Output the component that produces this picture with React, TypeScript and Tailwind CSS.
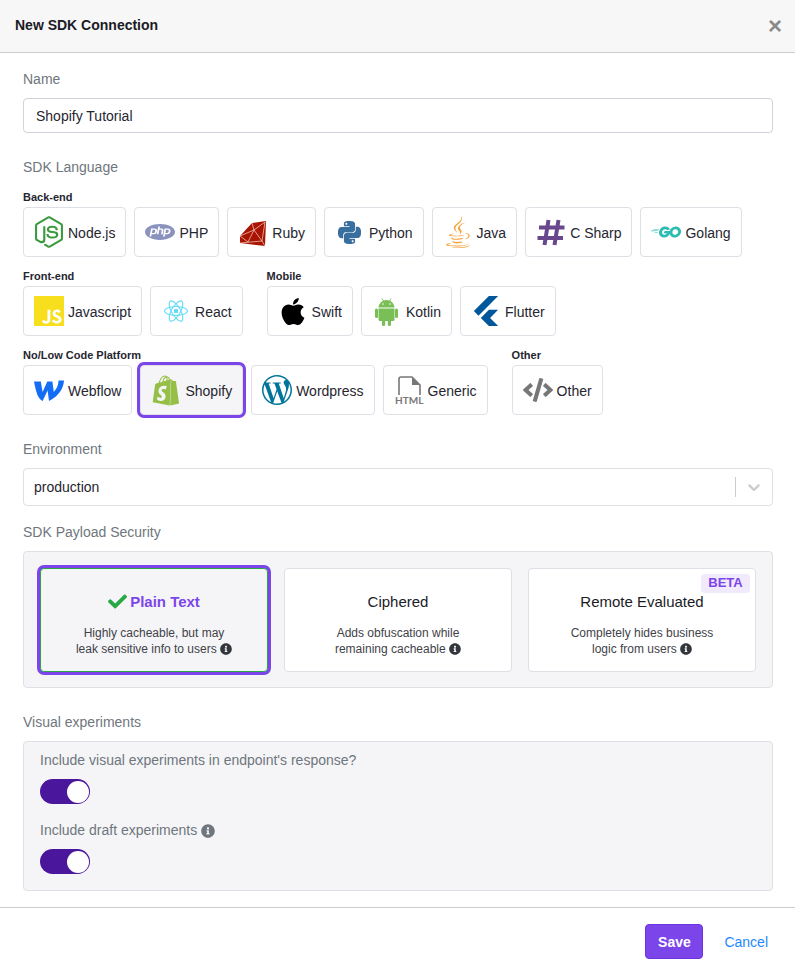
import React from "react";
import { FaNodeJs, FaJava, FaCheck, FaInfoCircle, FaApple, FaCode } from "react-icons/fa";
import { SiPhp, SiPython, SiGo, SiJavascript, SiReact, SiFlutter, SiShopify, SiWordpress } from "react-icons/si";

function HtmlIcon() {
  return (
    <svg width="30" height="30" viewBox="0 0 30 30" className="overflow-visible">
      <path d="M5 20V4a2 2 0 0 1 2-2h11l8 8v10" fill="none" stroke="#777" strokeWidth="1.600" />
      <path d="M18 2l8 8h-8z" fill="#777" />
      <text x="1" y="28.500" fontSize="10" fontWeight="700" fill="#777" fontFamily="Lato, sans-serif">HTML</text>
    </svg>
  );
}

function RubyIcon() {
  return (
    <svg width="30" height="30" viewBox="0 0 30 30">
      <path d="M28 4L14 6L2 19L2 26L27 29Z" fill="#a91401" />
      <path
        d="M14 6L16 13L2 19M16 13L27 5M16 13L24 24L27 5M24 24L2 26M24 24L27 29M16 13L10 25L2 19"
        fill="none"
        stroke="#f6d5cf"
        strokeWidth="0.700"
      />
    </svg>
  );
}

function WebflowIcon() {
  return (
    <svg width="30" height="30" viewBox="0 0 30 30">
      <path
        d="M0 6.500L6.800 6.500L8.600 17L13.300 6.500L18.400 6.500L19.800 17C23 13.500 24.300 10 24.600 5.500L30 5.500C29.600 12 26 20.500 15 26L13.600 15.500L8.600 26C4 24 2 17 0 6.500Z"
        fill="#146ef5"
      />
    </svg>
  );
}

function AndroidIcon() {
  return (
    <svg width="30" height="30" viewBox="0 0 30 30" fill="#79bf56">
      <path d="M6.500 11.500C6.800 7 10.500 4 14.500 4S22.200 7 22.500 11.500Z" />
      <path d="M10 2.500L11.700 5.500M19 2.500L17.300 5.500" stroke="#79bf56" strokeWidth="0.900" />
      <circle cx="11" cy="8" r="0.800" fill="#fff" />
      <circle cx="18" cy="8" r="0.800" fill="#fff" />
      <path d="M6.500 12.500H22.500V23.500A1.500 1.500 0 0 1 21 25H8A1.500 1.500 0 0 1 6.500 23.500Z" />
      <rect x="3" y="12.500" width="3" height="9.500" rx="1.500" />
      <rect x="23" y="12.500" width="3" height="9.500" rx="1.500" />
      <rect x="10" y="23" width="3.200" height="7" rx="1.600" />
      <rect x="15.800" y="23" width="3.200" height="7" rx="1.600" />
    </svg>
  );
}

function HashIcon() {
  return (
    <svg width="30" height="30" viewBox="0 0 30 30">
      <path d="M12.500 3L8.500 28M22.500 3L18.500 28M3 10.500H28.500M1.500 21H27" stroke="#68478d" strokeWidth="4" fill="none" />
    </svg>
  );
}

function Btn({ icon, label, selected }: { icon: React.ReactNode; label: string; selected?: boolean }) {
  return (
    <div
      className={
        selected
          ? "flex h-[50px] items-center gap-1 rounded border border-[#dee0e6] bg-[#f5f5f7] px-[10px] text-sm text-[#26262f] shadow-[0_0_0_3px_#7c45ea]"
          : "flex h-[50px] items-center gap-1 rounded border border-[#dee0e6] bg-white px-[10px] text-sm text-[#26262f]"
      }
    >
      <span className="flex h-[30px] w-[30px] items-center justify-center">{icon}</span>
      <span className="pt-[2px]">{label}</span>
    </div>
  );
}

function Group({ title, children }: { title: string; children: React.ReactNode }) {
  return (
    <div>
      <div className="mb-[2px] h-4 text-[11px] font-bold leading-4 text-[#26262f]">{title}</div>
      <div className="flex gap-2">{children}</div>
    </div>
  );
}

function Label({ children, className }: { children: React.ReactNode; className: string }) {
  return <div className={"text-sm leading-[21px] text-[#6f767d] " + className}>{children}</div>;
}

function Info() {
  return <FaInfoCircle size={12} className="inline-block align-[-2px] text-[#33363b]" />;
}

function Card({ title, lines, selected, beta }: { title: string; lines: [string, string]; selected?: boolean; beta?: boolean }) {
  return (
    <div
      className={
        selected
          ? "relative h-[104px] w-[228px] rounded border border-[#28a745] bg-[#f5f5f7] pt-[21px] text-center shadow-[0_0_0_3px_#7c45ea]"
          : "relative h-[104px] w-[228px] rounded border border-[#dee0e6] bg-white pt-[21px] text-center"
      }
    >
      {beta && (
        <div className="absolute right-[5px] top-[5px] flex h-[19px] w-[49px] items-center justify-center rounded bg-[#f1eafc] text-[13px] font-bold text-[#7c45ea]">
          BETA
        </div>
      )}
      <div
        className={
          selected
            ? "mb-[12px] flex h-[23px] items-center justify-center gap-[3px] text-[15px] font-bold text-[#7c45ea]"
            : "mb-[12px] flex h-[23px] items-center justify-center text-[15px] text-[#1b1b26]"
        }
      >
        {selected && <FaCheck size={19} className="text-[#28a745]" />}
        <span>{title}</span>
      </div>
      <div className="text-xs leading-4 text-[#3f4249]">
        <div>{lines[0]}</div>
        <div>
          {lines[1]} <Info />
        </div>
      </div>
    </div>
  );
}

function Toggle() {
  return (
    <div className="flex h-[25px] w-[50px] items-center justify-end rounded-full bg-[#4a169c] pr-[1px]">
      <div className="h-[22px] w-[22px] rounded-full bg-white" />
    </div>
  );
}

export default function App() {
  return (
    <div className="flex h-[973px] w-[795px] flex-col bg-white font-['Liberation_Sans',Arial,sans-serif] text-sm">
      <div className="flex h-[53px] items-center justify-between border-b border-[#cccccc] bg-[#f7f7f7] pb-[2px] pl-[15px] pr-[13px]">
        <div className="text-sm font-bold text-[#1b1b26]">New SDK Connection</div>
        <div className="mt-[2px] text-[24px] font-bold leading-none text-[#8a8a8a]">×</div>
      </div>

      <div className="flex-1 px-[22px] pl-[23px] pt-4">
        <Label className="mb-2">Name</Label>
        <div className="flex h-[35px] items-center rounded border border-[#ced4da] bg-white px-3 text-sm text-[#26262f]">
          Shopify Tutorial
        </div>

        <Label className="mt-6">SDK Language</Label>
        <div className="mt-[11px] flex flex-col gap-[11px]">
          <div className="flex gap-6">
            <Group title="Back-end">
              <Btn label="Node.js" icon={<FaNodeJs size={32} className="text-[#3c9a3e]" />} />
              <Btn label="PHP" icon={<SiPhp size={32} className="text-[#8993be]" />} />
              <Btn label="Ruby" icon={<RubyIcon />} />
              <Btn label="Python" icon={<SiPython size={23} className="text-[#386f9f]" />} />
              <Btn label="Java" icon={<FaJava size={32} className="text-[#f5a33d]" />} />
              <Btn label="C Sharp" icon={<HashIcon />} />
              <Btn label="Golang" icon={<SiGo size={32} className="text-[#2cbcb3]" />} />
            </Group>
          </div>
          <div className="flex gap-6">
            <Group title="Front-end">
              <Btn label="Javascript" icon={<SiJavascript size={30} className="text-[#f7df1e]" />} />
              <Btn label="React" icon={<SiReact size={24} className="text-[#61dafb]" />} />
            </Group>
            <Group title="Mobile">
              <Btn label="Swift" icon={<FaApple size={31} className="text-black" />} />
              <Btn label="Kotlin" icon={<AndroidIcon />} />
              <Btn label="Flutter" icon={<SiFlutter size={32} className="text-[#01579b]" />} />
            </Group>
          </div>
          <div className="flex gap-6">
            <Group title="No/Low Code Platform">
              <Btn label="Webflow" icon={<WebflowIcon />} />
              <Btn selected label="Shopify" icon={<SiShopify size={31} className="text-[#95bf47]" />} />
              <Btn label="Wordpress" icon={<SiWordpress size={30} className="text-[#00749a]" />} />
              <Btn label="Generic" icon={<HtmlIcon />} />
            </Group>
            <Group title="Other">
              <Btn label="Other" icon={<FaCode size={30} className="text-[#777777]" />} />
            </Group>
          </div>
        </div>

        <Label className="mb-2 mt-6">Environment</Label>
        <div className="flex h-[38px] items-center justify-between rounded border border-[#dee0e6] bg-white pl-[10px] text-sm text-[#26262f]">
          <span>production</span>
          <div className="flex items-center">
            <div className="h-5 w-px bg-[#cccccc]" />
            <svg width="20" height="20" viewBox="0 0 20 20" className="mx-2 text-[#cccccc]" fill="currentColor">
              <path d="M4.516 7.548c0.436-0.446 1.043-0.481 1.576 0l3.908 3.747 3.908-3.747c0.533-0.481 1.141-0.446 1.574 0 0.436 0.445 0.408 1.197 0 1.615-0.406 0.418-4.695 4.502-4.695 4.502-0.217 0.223-0.502 0.335-0.787 0.335s-0.57-0.112-0.789-0.335c0 0-4.287-4.084-4.695-4.502s-0.436-1.17 0-1.615z" />
            </svg>
          </div>
        </div>

        <Label className="mb-2 mt-4">SDK Payload Security</Label>
        <div className="flex gap-4 rounded border border-[#dee0e6] bg-[#f5f5f7] px-4 pb-[15px] pt-4">
          <Card selected title="Plain Text" lines={["Highly cacheable, but may", "leak sensitive info to users"]} />
          <Card title="Ciphered" lines={["Adds obfuscation while", "remaining cacheable"]} />
          <Card beta title="Remote Evaluated" lines={["Completely hides business", "logic from users"]} />
        </div>

        <Label className="mb-2 mt-6">Visual experiments</Label>
        <div className="rounded border border-[#dee0e6] bg-[#f5f5f7] px-4 pb-4 pt-[8px]">
          <Label className="mb-2">Include visual experiments in endpoint's response?</Label>
          <Toggle />
          <Label className="mb-2 mt-4 flex items-center gap-1">
            Include draft experiments <FaInfoCircle size={14} className="text-[#6f767d]" />
          </Label>
          <Toggle />
        </div>
      </div>

      <div className="flex h-[66px] items-start justify-end gap-[9px] border-t border-[#cccccc] pr-[15px] pt-4">
        <div className="flex h-[35px] w-[58px] items-center justify-center rounded border border-[#6f33e0] bg-[#7c45ea] text-sm font-bold text-white">
          Save
        </div>
        <div className="flex h-[35px] items-center px-3 text-sm text-[#1e88ff]">Cancel</div>
      </div>
    </div>
  );
}
